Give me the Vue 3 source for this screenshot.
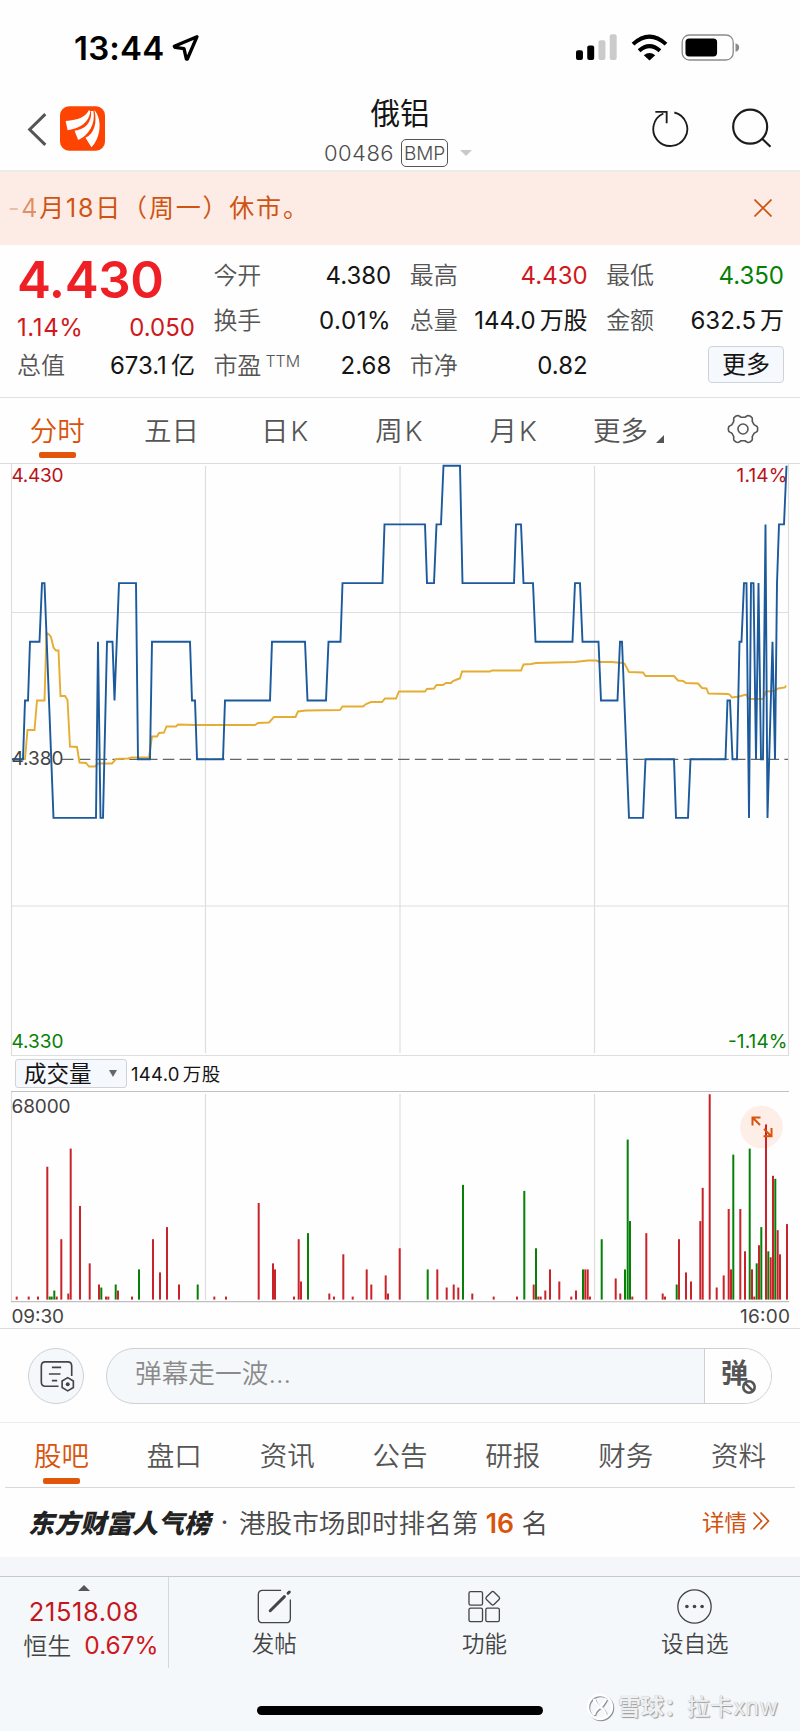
<template>
  <div class="page">
    <!-- 状态栏 -->
    <div class="status-bar">
      <div class="status-left">
        <span class="clock">13:44</span>
        <svg class="icon-location" viewBox="516 102 84 84">
          <path d="M591 110 L523 139 L525 142 L552 146 L559 177 L562 177 Z" />
        </svg>
      </div>
      <div class="status-right">
        <svg class="icon-signal" viewBox="528 102 124 80">
          <rect x="528" y="150" width="21" height="30" rx="6" />
          <rect x="562" y="136" width="21" height="44" rx="6" />
          <rect class="dim" x="596" y="120" width="21" height="60" rx="6" />
          <rect class="dim" x="630" y="102" width="21" height="78" rx="6" />
        </svg>
        <svg class="icon-wifi" viewBox="692 100 110 80">
          <path class="arc" d="M698 130 Q747 85 796 130" />
          <path class="arc" d="M716 150 Q747 122 778 150" />
          <path d="M730 163 Q747 149 764 163 L747 179 Z" />
        </svg>
        <svg class="icon-battery" viewBox="842 100 178 82">
          <rect class="shell" x="845" y="103" width="155" height="76" rx="22" />
          <rect x="855" y="114" width="96" height="54" rx="11" />
          <path class="cap" d="M1007 128 Q1018 131 1018 141 Q1018 151 1007 154 Z" />
        </svg>
      </div>
    </div>

    <!-- 标题栏 -->
    <header class="header">
      <div class="header-left">
        <svg class="icon-back" viewBox="80 334 60 104">
          <path d="M135 340 L88 386 L135 432" />
        </svg>
        <svg class="logo" viewBox="180 318 136 134">
          <rect x="180" y="318" width="136" height="134" rx="27" />
          <path d="M267 330 C258 350 236 360 197 362 L203 390 C242 385 268 366 272 332 Z" />
          <path d="M274 332 C277 368 254 388 224 392 L235 420 C266 405 288 373 281 332 Z" />
          <path d="M284 329 C293 368 284 400 257 413 L275 442 C303 414 309 358 284 329 Z" />
        </svg>
      </div>
      <div class="header-title">
        <div class="stock-name">俄铝</div>
        <div class="stock-sub">
          <span class="stock-code">00486</span>
          <span class="bmp">BMP</span>
          <span class="caret-down"></span>
        </div>
      </div>
      <div class="header-right">
        <svg class="icon-refresh" viewBox="758 328 114 116">
          <path d="M825 338 A51 51 0 1 1 792 341" />
          <path d="M768 336 H802 V370" />
        </svg>
        <svg class="icon-search" viewBox="994 324 122 120">
          <circle cx="1051" cy="380" r="51" />
          <path d="M1087 416 L1112 440" />
        </svg>
      </div>
    </header>

    <!-- 公告 -->
    <div class="notice">
      <span class="notice-text"><i>-</i><b>4</b>月18日（周一）休市。</span>
      <svg class="icon-close" viewBox="0 0 18 18">
        <path d="M0.5 0.5 L17.5 17.5 M17.5 0.5 L0.5 17.5" />
      </svg>
    </div>

    <!-- 行情数据 -->
    <section class="quote">
      <div class="quote-col first">
        <div class="price">4.430</div>
        <div class="quote-cell change"><span class="red wide">1.14%</span><span class="red">0.050</span></div>
        <div class="quote-cell"><span class="label">总值</span><span>673.1<em>亿</em></span></div>
      </div>
      <div v-for="(col, i) in quoteCols" :key="i" class="quote-col">
        <div v-for="cell in col" :key="cell.label" class="quote-cell">
          <span class="label">{{ cell.label }}<sup v-if="cell.sup">{{ cell.sup }}</sup></span>
          <span :class="cell.tone">{{ cell.value }}<em v-if="cell.unit">{{ cell.unit }}</em></span>
        </div>
        <div v-if="i === 2" class="quote-cell end"><button class="more-btn">更多</button></div>
      </div>
    </section>

    <!-- 周期切换 -->
    <nav class="period-tabs">
      <div v-for="(tab, i) in periods" :key="tab" class="tab" :class="{ active: i === 0, k: tab.endsWith('K') }">{{ tab }}</div>
      <div class="tab">更多<span class="corner"></span></div>
      <div class="tab">
        <svg class="icon-gear" viewBox="-16 -16 32 32">
          <path :d="gearPath" />
          <circle r="5" />
        </svg>
      </div>
    </nav>

    <!-- 分时图 -->
    <svg class="price-chart" viewBox="0 464 800 592">
      <g class="grid">
        <path d="M11.5 464 V1055.5 H788.5 V464" />
        <path d="M205.5 466 V1053 M400 466 V1053 M594.5 466 V1053 M12 612.5 H788 M12 906 H788" />
      </g>
      <path class="base-line" d="M62 759.3 H788" />
      <polyline class="avg-line" :points="avgPoints" />
      <text class="red" x="11.5" y="481.5" textLength="52">4.430</text>
      <text class="red" x="736.5" y="481.5" textLength="51">1.14%</text>
      <text x="11.5" y="765" textLength="52">4.380</text>
      <polyline class="price-line" :points="pricePoints" />
      <text class="green" x="11.5" y="1047.5" textLength="52">4.330</text>
      <text class="green" x="728" y="1047.5" textLength="59.5">-1.14%</text>
    </svg>

    <!-- 成交量 -->
    <div class="volume-head">
      <button class="volume-select">成交量<span class="caret"></span></button>
      <span class="volume-total">144.0<em>万股</em></span>
    </div>
    <svg class="volume-chart" viewBox="0 1091 800 237">
      <path class="edge" d="M11 1091.5 H789 M11 1301.6 H789" />
      <path class="grid" d="M11.5 1092 V1301 M205.5 1094 V1300 M400 1094 V1300 M594.5 1094 V1300" />
      <circle class="expand-bg" cx="761.5" cy="1127" r="21.3" />
      <rect
        v-for="bar in bars"
        :key="bar.x"
        :class="bar.tone"
        :x="bar.x"
        :y="bar.y"
        width="2"
        :height="bar.h"
      />
      <g class="expand">
        <path d="M752.5 1125.5 V1117.5 H760.5 M753 1118 L760 1125" />
        <path d="M771.5 1128 V1136.3 H763.5 M764 1129 L771 1136" />
      </g>
      <text x="11.5" y="1112.5" textLength="59">68000</text>
      <text x="11.5" y="1323" textLength="52.5">09:30</text>
      <text x="740" y="1323" textLength="50">16:00</text>
    </svg>

    <!-- 弹幕输入 -->
    <div class="danmu">
      <div class="danmu-setting">
        <svg viewBox="118 122 106 96">
          <path d="M214 170 V140 Q214 127 202 127 H134 Q122 127 122 140 V188 Q122 201 134 201 H174" />
          <path d="M154 144 H182 M145 164 H180 M154 184 H170" />
          <path d="M202 175 L219 185 V205 L202 215 L185 205 V185 Z" />
          <circle class="dot" cx="202" cy="195" r="6" />
        </svg>
      </div>
      <div class="danmu-input">
        <span class="placeholder">弹幕走一波...</span>
        <div class="danmu-toggle">
          <span class="danmu-char">弹</span>
          <svg class="icon-ban" viewBox="0 0 16 16">
            <circle cx="8" cy="8" r="5.7" />
            <path d="M4.3 4.3 L11.7 11.7" />
          </svg>
        </div>
      </div>
    </div>

    <nav class="info-tabs">
      <div v-for="(tab, i) in infoTabs" :key="tab" class="tab" :class="{ active: i === 0 }">{{ tab }}</div>
    </nav>

    <!-- 人气榜 -->
    <div class="rank">
      <span class="rank-brand">东方财富人气榜</span>
      <span class="rank-dot">·</span>
      <span class="rank-text">港股市场即时排名第 <b>16</b> 名</span>
      <span class="rank-link">详情
        <svg viewBox="0 0 18 20"><path d="M1.5 1.5 L9.5 10 L1.5 18.5 M8.5 1.5 L16.5 10 L8.5 18.5" /></svg>
      </span>
    </div>

    <!-- 底部栏 -->
    <footer class="footer">
      <div class="footer-row">
        <div class="index-box">
          <span class="caret-up"></span>
          <div class="index-value">21518.08</div>
          <div class="index-line"><span>恒生</span><span class="red">0.67%</span></div>
        </div>
        <div class="action">
          <svg viewBox="768 802 106 110">
            <path d="M841 808 H785 Q772 808 772 821 V893 Q772 906 785 906 H856 Q869 906 869 893 V836" />
            <path class="pen" d="M808 870 L851 827" />
            <path class="pen" d="M862 817 L866 813" />
          </svg>
          <span>发帖</span>
        </div>
        <div class="action">
          <svg viewBox="200 802 106 110">
            <rect x="206" y="812" width="41" height="41" rx="5" />
            <rect x="206" y="862" width="41" height="41" rx="5" />
            <rect x="257" y="862" width="41" height="41" rx="5" />
            <rect x="262" y="816" width="32" height="32" rx="5" transform="rotate(45 278 832)" />
          </svg>
          <span>功能</span>
        </div>
        <div class="action">
          <svg viewBox="831 802 106 110">
            <circle cx="884" cy="857" r="50.5" />
            <circle class="dot" cx="861" cy="857" r="5.5" />
            <circle class="dot" cx="884" cy="857" r="5.5" />
            <circle class="dot" cx="907" cy="857" r="5.5" />
          </svg>
          <span>设自选</span>
        </div>
      </div>
      <div class="home-bar"></div>
      <div class="watermark">
        <svg viewBox="0 0 28 28">
          <circle cx="14" cy="14" r="12" />
          <path d="M8 6 Q10 12 14 14 Q19 17 20 23 M20 6 Q17 12 14 14 Q9 17 8 22" />
        </svg>
        <span><b>雪球：</b>拉卡xnw</span>
      </div>
    </footer>
  </div>
</template>

<script setup>
const quoteCols = [
  [
    { label: '今开', value: '4.380' },
    { label: '换手', value: '0.01%', tone: 'wide' },
    { label: '市盈', sup: 'TTM', value: '2.68' }
  ],
  [
    { label: '最高', value: '4.430', tone: 'red' },
    { label: '总量', value: '144.0', unit: '万股' },
    { label: '市净', value: '0.82' }
  ],
  [
    { label: '最低', value: '4.350', tone: 'green' },
    { label: '金额', value: '632.5', unit: '万' }
  ]
];

const periods = ['分时', '五日', '日K', '周K', '月K'];
const infoTabs = ['股吧', '盘口', '资讯', '公告', '研报', '财务', '资料'];

// 价格走势：[x, 相对昨收的档位]，每档 0.01
const price = [
  [12, 0], [23, 0], [25, 1], [28, 1], [30, 2], [39.5, 2], [42, 3], [44.5, 3], [53.5, -1], [96, -1],
  [98, 2], [100.5, -1], [103, -1], [107, 2], [112.5, 2], [114.5, 1], [119, 3], [136, 3], [138, 0], [150, 0],
  [152, 2], [190, 2], [192, 1], [195, 1], [197, 0], [223, 0], [225, 1], [270, 1], [272, 2], [305, 2],
  [307.5, 1], [326, 1], [328.5, 2], [340.5, 2], [342.5, 3], [382.5, 3], [384.5, 4], [425, 4], [427, 3], [434, 3],
  [436.5, 4], [441, 4], [443.5, 5], [460, 5], [462.5, 3], [514, 3], [516, 4], [521, 4], [523.5, 3], [533, 3],
  [535.5, 2], [572.5, 2], [575, 3], [580, 3], [582.5, 2], [598.5, 2], [601, 1], [617.5, 1], [620, 2], [622, 2],
  [629, -1], [643, -1], [645.5, 0], [674, 0], [676, -1], [688, -1], [690.5, 0], [725.5, 0], [727.5, 1], [730, 1],
  [732.5, 0], [737, 0], [739.5, 2], [741.5, 2], [744, 3], [746.5, 3], [749, -1], [751, 3], [753.5, 3], [756, 0],
  [758.5, 3], [761, 0], [763, 0], [765.5, 4], [767.5, -1], [772.5, 2], [775, 0], [777, 3], [779, 4], [784, 4],
  [786.5, 5]
];
const pricePoints = price.map(([x, level]) => `${x},${759.2 - level * 58.7}`).join(' ');

// 均价线
const avgPoints = `12,759 25,759 27.5,730 34.5,730 37,700.5 44.5,700.5 46.5,633 49,634.5 51,637 53.5,647.5 56,650.5
  58.5,650.5 60.5,696 65,696 67.5,700 70,746.5 77,747 79.5,762.5 86,763 89,766.5 95,766.5 98,763.5 112,763.5 116,759
  128,758.5 132,757.5 149,757.5 152,736.5 157,736.5 159,733 164,732.5 166.5,726.5 176,726.5 178,724.5 195,725 255,725
  258,723 269,722.5 274,717 295.5,717 298,711.5 306,710.5 340,710 342.5,706.5 363,706.5 366,704 371,702 382,702
  385,698.5 396,698.5 399,691.5 425,691.5 427,689 434,688.5 436.5,685 443,685 446,683 451,683 453,681 458,679
  460,678.5 462,671.5 490,671.5 492,670.5 521,670.5 523.5,664.5 531,664 536,663 575,662 588,660.5 596,660.5 600,662
  612,662 622,663 624.5,663.5 629,672 643,672.5 645.5,676 674,676 678,680.5 683,681 686,683 698,683.5 702,688
  706.5,688.5 708.5,693.5 728,694 730,695 732,697.5 739,696.5 746,694.5 749,699 763,699 766,691.5 774,691 778,688.5
  785,687.5 786,685.5`;

// 成交量：x:千股，g 为绿柱
const volume = `16.7:1 28.7:1 38:1 47.3:44 49.7:1g 51.7:1g 54.3:3g 56.7:1 61.3:20 68.3:2 70.7:50 80:31 89.7:12 99:5
  101.3:4g 106:1 108.3:1 115.7:5g 118:3 132:1 139:10g 153:20 160:9 167:24 179:5 197.7:5g 214.3:1 226:1 258.7:32
  273:12 275:10 294:1 298.7:20 301:6 308:22g 329.3:2 334:1 343.3:15 352.7:1 366.7:10 371.3:5 385.7:8 388:2 399.7:17
  427.7:10g 437.3:10 446.7:4 453.7:5 458.3:4 463:38g 472.3:2 493.7:1 517:1 524.3:36g 533.7:5 536:17g 538.3:1
  540.7:1 545.3:3 550:10 559.3:6 571.3:1 576:3 583:10g 585.3:10 587.7:10 590:1 601.7:20g 615.7:7 620.3:2 625:10g
  627.7:53g 630:26g 632.3:1 646.3:22 662.7:2 665:1 676.7:5g 679:20 686:9 691:6 700.3:26 702.7:37 709.7:68 716.7:4
  723.7:8 728.7:30 731:10 733.3:48g 740.3:30 745:16 749.7:50g 752:10 754.3:1 756.7:12g 759:18 761.3:24g 766:58
  768.3:16g 770.7:14 773:41 775.3:40g 777.7:23 780:15 787:25`;
const bars = volume.split(/\s+/).map((item) => {
  const [x, v] = item.split(':');
  const h = parseInt(v) * 3.02;
  return { x: x - 1, y: 1299.6 - h, h, tone: v.endsWith('g') ? 'green' : 'red' };
});

// 六齿齿轮轮廓
const gearPath = Array.from({ length: 73 }, (_, i) => {
  const a = (i * 5 * Math.PI) / 180;
  const r = 13.2 + 1.5 * Math.tanh(2 * Math.cos(6 * a));
  return `${i ? 'L' : 'M'}${(r * Math.cos(a)).toFixed(2)} ${(r * Math.sin(a)).toFixed(2)}`;
}).join('') + 'Z';
</script>

<style>
body {
  margin: 0;
}
</style>

<style scoped>
.page {
  width: 800px;
  height: 1731px;
  overflow: hidden;
  background: #fefefe;
  color: #151515;
  font-family: 'Inter', 'Noto Sans CJK SC', sans-serif;
  font-weight: 380;
  box-sizing: border-box;
}

.page * {
  box-sizing: border-box;
}

svg {
  display: block;
  flex-shrink: 0;
}

em {
  font-style: normal;
}

.red {
  color: #cf1820;
}

.green {
  color: #078007;
}

/* 状态栏 */
.status-bar {
  height: 94px;
  padding: 0 60px 0 74px;
  display: flex;
  align-items: center;
  justify-content: space-between;
}

.status-left,
.status-right {
  display: flex;
  align-items: center;
  color: #000;
}

.clock {
  font-size: 33px;
  font-weight: 600;
  line-height: 40px;
  margin-top: 1px;
  letter-spacing: 0.2px;
}

.icon-location {
  width: 28px;
  height: 28px;
  margin-left: 8px;
  margin-top: 2px;
  fill: none;
  stroke: #000;
  stroke-width: 10;
  stroke-linejoin: round;
}

.icon-signal {
  width: 41px;
  height: 27px;
}

.icon-signal .dim {
  fill: #cbcbcb;
}

.icon-wifi {
  width: 37px;
  height: 27px;
  margin-left: 14px;
}

.icon-wifi .arc {
  fill: none;
  stroke: #000;
  stroke-width: 12;
}

.icon-battery {
  width: 59px;
  height: 27px;
  margin-left: 13px;
}

.icon-battery .shell {
  fill: none;
  stroke: #8a8a8a;
  stroke-width: 4;
}

.icon-battery .cap {
  fill: #8a8a8a;
}

/* 标题栏 */
.header {
  height: 78px;
  border-bottom: 2px solid #ebebeb;
  display: grid;
  grid-template-columns: 1fr auto 1fr;
}

.header-left {
  display: flex;
  align-items: center;
  padding-left: 27px;
  padding-bottom: 6px;
  height: 76px;
}

.icon-back {
  width: 20px;
  height: 35px;
  fill: none;
  stroke: #555;
  stroke-width: 9;
}

.logo {
  width: 45px;
  height: 45px;
  margin-left: 13px;
  margin-top: -1px;
}

.logo rect {
  fill: #fe4403;
}

.logo path {
  fill: #fff;
}

.header-title {
  display: flex;
  flex-direction: column;
  align-items: center;
}

.stock-name {
  font-size: 29.5px;
  line-height: 39px;
  height: 45px;
}

.stock-sub {
  display: flex;
  align-items: center;
  height: 28px;
  color: #4c4c4c;
  margin-left: -4px;
}

.stock-code {
  font-size: 22px;
  font-weight: 300;
  letter-spacing: 0.5px;
}

.bmp {
  width: 47px;
  height: 28px;
  line-height: 27px;
  margin-left: 7px;
  border: 1.4px solid #555;
  border-radius: 5px;
  font-size: 19px;
  font-weight: 300;
  text-align: center;
}

.caret-down {
  margin-left: 12px;
  border: 6.5px solid transparent;
  border-top-color: #c9c9c9;
  border-bottom: 0;
}

.header-right {
  display: flex;
  justify-content: flex-end;
  padding-top: 14px;
  padding-right: 28px;
}

.header-right svg {
  fill: none;
  stroke: #1c1c1c;
}

.icon-refresh {
  width: 38px;
  height: 39px;
  margin-top: 1px;
  stroke-width: 5.5;
}

.icon-search {
  width: 41px;
  height: 40px;
  margin-left: 41px;
  stroke-width: 6.5;
}

/* 公告 */
.notice {
  height: 73px;
  padding: 0 28px 0 8px;
  display: flex;
  align-items: center;
  justify-content: space-between;
  background: #fcece5;
  color: #cf5413;
}

.notice-text {
  margin-bottom: 5px;
  font-size: 25px;
  letter-spacing: 1.8px;
  white-space: nowrap;
}

.notice-text i,
.notice-text b {
  font-style: normal;
  font-weight: 380;
  opacity: 0.6;
}

.notice-text i {
  opacity: 0.3;
}

.icon-close {
  width: 18px;
  height: 18px;
  margin-top: -2px;
  fill: none;
  stroke: #cf5413;
  stroke-width: 1.7;
}

/* 行情数据 */
.quote {
  height: 153px;
  padding: 8px 16px 0 17px;
  border-bottom: 1.5px solid #e2e2e2;
  display: grid;
  grid-template-columns: repeat(4, 1fr);
  column-gap: 18.5px;
}

.quote-cell {
  height: 45px;
  display: flex;
  align-items: baseline;
  justify-content: space-between;
  font-size: 24px;
  line-height: 45px;
  white-space: nowrap;
}

.quote-cell.end {
  align-items: center;
  justify-content: flex-end;
}

.quote-cell .label {
  font-weight: 350;
  color: #555;
}

.quote-cell em {
  margin-left: 4px;
}

.quote-cell .wide {
  letter-spacing: 0.6px;
}

.quote-cell sup {
  font-size: 16px;
  font-weight: 300;
  margin-left: 4px;
  line-height: 0;
  vertical-align: 7px;
}

.price {
  height: 54px;
  line-height: 53px;
  font-size: 51px;
  font-weight: 600;
  letter-spacing: -0.4px;
  color: #ee2026;
}

.quote-cell.change {
  height: 36px;
  line-height: 42px;
}

.more-btn {
  width: 76px;
  height: 37px;
  margin-bottom: 3px;
  padding: 0;
  border: 1px solid #cfd3d8;
  border-radius: 4px;
  background: #f5f8fc;
  font-family: inherit;
  font-weight: 380;
  font-size: 24px;
  line-height: 33px;
  color: #151515;
}

/* 标签栏 */
.period-tabs,
.info-tabs {
  display: flex;
  color: #555;
  font-weight: 350;
}

.tab {
  flex: 1;
  position: relative;
  display: flex;
  align-items: center;
  justify-content: center;
  padding-bottom: 3px;
  font-size: 27.5px;
  white-space: nowrap;
}

.tab.k {
  letter-spacing: 2px;
}

.tab.active {
  color: #d9530b;
}

.tab.active::after {
  content: '';
  position: absolute;
  left: 50%;
  bottom: 5px;
  width: 37px;
  height: 6px;
  margin-left: -18.5px;
  border-radius: 2px;
  background: #e2560c;
}

.period-tabs {
  height: 66px;
  border-bottom: 1px solid #dcdcdc;
}

.corner {
  margin-left: 8px;
  margin-top: 20px;
  border-left: 8px solid transparent;
  border-bottom: 8px solid #555;
}

.icon-gear {
  width: 32px;
  height: 32px;
  fill: none;
  stroke: #555;
  stroke-width: 1.6;
}

/* 分时图 */
.price-chart {
  width: 800px;
  height: 592px;
}

.grid {
  fill: none;
  stroke: #dedede;
  stroke-width: 1.2;
}

.base-line {
  stroke: #666;
  stroke-width: 1.2;
  stroke-dasharray: 11.5 5.3;
}

.price-line {
  fill: none;
  stroke: #1c5a9c;
  stroke-width: 1.9;
}

.avg-line {
  fill: none;
  stroke: #e6ad33;
  stroke-width: 1.9;
}

text {
  font-size: 19px;
  fill: #444;
}

text.red {
  fill: #b8131b;
}

rect.red {
  fill: #c9232a;
}

text.green,
rect.green {
  fill: #078007;
}

/* 成交量 */
.volume-head {
  height: 35px;
  padding-left: 15px;
  display: flex;
  align-items: center;
}

.volume-select {
  width: 112px;
  height: 29px;
  padding: 0 9px 0 8px;
  display: flex;
  align-items: center;
  justify-content: space-between;
  border: 1px solid #cfd3d8;
  border-radius: 3px;
  background: #f5f8fc;
  font-family: inherit;
  font-weight: 380;
  font-size: 22.5px;
  line-height: 27px;
  color: #151515;
}

.volume-select .caret {
  border: 4.5px solid transparent;
  border-top: 7px solid #666;
  border-bottom: 0;
}

.volume-total {
  margin-left: 4px;
  margin-bottom: 2px;
  font-size: 18.5px;
  letter-spacing: 0.3px;
}

.volume-total em {
  margin-left: 3px;
}

.volume-chart {
  width: 800px;
  height: 237px;
}

.volume-chart .edge {
  stroke: #bfbfc4;
  stroke-width: 1.2;
}

.expand-bg {
  fill: #fdeee8;
}

.expand {
  fill: none;
  stroke: #d9530b;
  stroke-width: 2;
}

/* 弹幕 */
.danmu {
  height: 95px;
  padding: 0 28px;
  border-top: 1px solid #dcdcdc;
  border-bottom: 1px solid #ececec;
  display: flex;
  align-items: center;
}

.danmu-setting {
  width: 56px;
  height: 56px;
  border: 1px solid #cdd0d4;
  border-radius: 50%;
  background: #f5f8fb;
  display: flex;
  align-items: center;
  justify-content: center;
}

.danmu-setting svg {
  width: 35px;
  height: 32px;
  margin-left: 2px;
  fill: none;
  stroke: #444;
  stroke-width: 5;
}

.danmu-setting .dot,
.action .dot {
  fill: #444;
  stroke: none;
}

.danmu-input {
  width: 666px;
  height: 56px;
  margin-left: 22px;
  border: 1px solid #cdd0d4;
  border-radius: 28px;
  background: #f5f8fb;
  overflow: hidden;
  display: flex;
  justify-content: space-between;
}

.placeholder {
  padding-left: 28px;
  font-size: 26.7px;
  line-height: 48px;
  font-weight: 350;
  color: #8a8a8a;
}

.danmu-toggle {
  width: 67px;
  border-left: 1px solid #cdd0d4;
  background: #fefefe;
  display: flex;
  padding-left: 16px;
  position: relative;
}

.danmu-char {
  font-size: 27px;
  font-weight: 700;
  line-height: 50px;
  color: #555;
}

.icon-ban {
  position: absolute;
  left: 36px;
  top: 30px;
  width: 16px;
  height: 16px;
  fill: #fefefe;
  stroke: #555;
  stroke-width: 2.6;
}

.info-tabs {
  height: 65px;
  margin: 0 5px;
  border-bottom: 1px solid #d9d9d9;
}

.info-tabs .tab.active::after {
  bottom: 3px;
}

/* 人气榜 */
.rank {
  height: 69px;
  padding: 0 30px 3px 28px;
  display: flex;
  align-items: center;
  white-space: nowrap;
  color: #4a4a4a;
}

.rank-brand {
  font-size: 26px;
  font-weight: 900;
  font-style: italic;
  color: #222;
}

.rank-dot {
  width: 29px;
  text-align: center;
  font-size: 26px;
}

.rank-text {
  font-size: 26.6px;
  font-weight: 350;
}

.rank-text b {
  font-weight: 600;
  color: #d9530b;
}

.rank-link {
  margin-left: auto;
  display: flex;
  align-items: center;
  font-size: 22.5px;
  color: #cf5413;
}

.rank-link svg {
  width: 18px;
  height: 20px;
  margin-left: 5px;
  fill: none;
  stroke: #cf5413;
  stroke-width: 1.7;
}

/* 底部栏 */
.footer {
  position: relative;
  height: 174px;
  border-top: 19px solid #f5f6fa;
  background: #f5f8fb;
}

.footer-row {
  display: flex;
  height: 92px;
  border-top: 1px solid #c6cace;
}

.index-box {
  width: 169px;
  border-right: 1px solid #d5d8dc;
  display: flex;
  flex-direction: column;
  align-items: center;
  padding-top: 8px;
}

.caret-up {
  border: 6.5px solid transparent;
  border-bottom-color: #555;
  border-top: 0;
}

.index-value {
  margin-top: 4px;
  line-height: 34px;
  font-size: 25.5px;
  letter-spacing: 0.6px;
  color: #c4161c;
}

.index-line {
  display: flex;
  align-items: center;
  gap: 13px;
  margin-left: 14px;
  height: 31px;
  font-size: 24px;
  font-weight: 350;
  color: #444;
}

.index-line .red {
  font-size: 24.5px;
  font-weight: 380;
}

.action {
  flex: 1;
  display: flex;
  flex-direction: column;
  align-items: center;
  padding-top: 11px;
  font-size: 22.5px;
  line-height: 33px;
  font-weight: 350;
  color: #444;
}

.action svg {
  width: 35px;
  height: 37px;
  margin-bottom: 2px;
  fill: none;
  stroke: #444;
  stroke-width: 4;
}

.action .pen {
  stroke-width: 9;
  stroke-linecap: round;
}

.home-bar {
  width: 286px;
  height: 9px;
  margin: 38px auto 0;
  border-radius: 5px;
  background: #000;
}

.watermark {
  position: absolute;
  right: 22px;
  bottom: 8px;
  display: flex;
  align-items: center;
  font-size: 23px;
  line-height: 32px;
  color: #eef0f2;
  text-shadow: 1px 1px 1px #96999d, 0 0 1px #a9adb2;
}

.watermark svg {
  width: 28px;
  height: 28px;
  margin-right: 4px;
  fill: none;
  stroke: #fff;
  stroke-width: 2.5;
  filter: drop-shadow(1px 1px 0.7px #8b8f94);
}
</style>
